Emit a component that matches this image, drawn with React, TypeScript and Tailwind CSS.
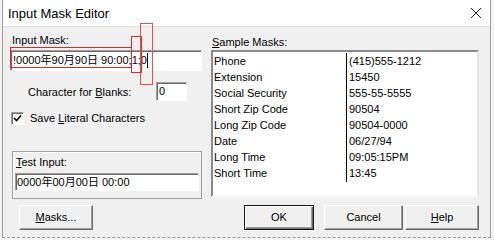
import { ReactNode } from "react";

const sunken =
  "border border-t-[#a0a0a0] border-l-[#a0a0a0] border-b-white border-r-white shadow-[inset_1px_1px_0_#696969] bg-white";

function Btn({ children, w, def, className = "" }: { children: ReactNode; w: string; def?: boolean; className?: string }) {
  return (
    <div
      className={`${w} h-[25px] flex items-center justify-center bg-[#f0f0f0] ${
        def
          ? "border border-[#1a1a1a] shadow-[inset_1px_1px_0_#fff,inset_-1px_-1px_0_#696969,inset_-2px_-2px_0_#a0a0a0]"
          : "border border-t-white border-l-white border-b-[#696969] border-r-[#696969] shadow-[inset_-1px_-1px_0_#a0a0a0]"
      } ${className}`}
    >
      {children}
    </div>
  );
}

const samples = [
  ["Phone", "(415)555-1212"],
  ["Extension", "15450"],
  ["Social Security", "555-55-5555"],
  ["Short Zip Code", "90504"],
  ["Long Zip Code", "90504-0000"],
  ["Date", "06/27/94"],
  ["Long Time", "09:05:15PM"],
  ["Short Time", "13:45"],
];

export default function App() {
  return (
    <div
      className="relative w-[494px] h-[240px] bg-[#f4f4f4] overflow-hidden text-[11px] leading-[13px] text-black"
      style={{ fontFamily: '"Liberation Sans", "Noto Sans CJK SC", sans-serif' }}
    >
      <div className="ml-[2px] w-[489px] h-[237px] border-x border-[#9a9a9a] flex flex-col">
        {/* title bar */}
        <div className="h-[26px] bg-white flex items-center pl-[5px] pr-[8px]">
          <span className="text-[13px]">Input Mask Editor</span>
          <svg className="ml-auto" width="12" height="12" viewBox="0 0 12 12">
            <path d="M1 1L11 11M11 1L1 11" stroke="#222" strokeWidth="1" fill="none" />
          </svg>
        </div>

        <div className="flex-1 bg-[#f0f0f0] border-t border-[#e0e0e0] flex flex-col">
          <div className="h-[178px] flex pl-[7px]">
            {/* left column */}
            <div className="w-[192px] flex flex-col">
              <div className="mt-[7px] pl-[2px]">Input Mask:</div>
              <div className={`mt-[3px] h-[21px] ${sunken} flex items-center pl-[2px]`}>
                <span className="whitespace-nowrap">!0000年90月90日 90:00;1;0</span>
                <span className="w-px h-[15px] bg-black" />
              </div>
              <div className="mt-[11px] flex items-center">
                <span className="ml-[18px] w-[128px] mt-[2px]">
                  Character for <u>B</u>lanks:
                </span>
                <div className={`w-[31px] h-[19px] ${sunken} flex items-center pl-[2px]`}>0</div>
              </div>
              <div className="mt-[11px] flex items-center">
                <div className={`ml-[1px] w-[13px] h-[13px] ${sunken} flex items-center justify-center`}>
                  <svg width="9" height="9" viewBox="0 0 9 9">
                    <path d="M1 4L3.5 6.5L8 1.5" stroke="#000" strokeWidth="1.6" fill="none" />
                  </svg>
                </div>
                <span className="ml-[6px]">
                  Save <u>L</u>iteral Characters
                </span>
              </div>
              <div className="mt-[26px] ml-[2px] w-[190px] h-[48px] border border-[#a0a0a0] shadow-[inset_1px_1px_0_#fff] flex flex-col">
                <div className="mt-[4px] pl-[3px]">
                  <u>T</u>est Input:
                </div>
                <div className={`mt-[4px] ml-[2px] w-[184px] h-[18px] ${sunken} flex items-center pl-[1px]`}>
                  0000年00月00日 00:00
                </div>
              </div>
            </div>

            {/* right column */}
            <div className="ml-[9px] w-[268px] flex flex-col">
              <div className="mt-[9px] pl-[1px]">
                <u>S</u>ample Masks:
              </div>
              <div className="mt-[1px] h-[147px] bg-white border-2 border-t-[#8a8a8a] border-l-[#8a8a8a] border-b-[#f8f8f8] border-r-[#e3e3e3] flex pt-[1px]">
                <div className="w-[133px] flex flex-col pl-[1px]">
                  {samples.map(([k]) => (
                    <div key={k} className="h-[16px] flex items-center">
                      {k}
                    </div>
                  ))}
                </div>
                <div className="flex flex-col pl-[2px] border-l border-black h-[129px]">
                  {samples.map(([k, v]) => (
                    <div key={k} className="h-[16px] flex items-center">
                      {v}
                    </div>
                  ))}
                </div>
              </div>
            </div>
          </div>

          {/* buttons */}
          <div className="flex pl-[7px]">
            <Btn w="w-[74px]" className="ml-[9px]">
              <span>
                <u>M</u>asks...
              </span>
            </Btn>
            <Btn w="w-[70px]" def className="ml-[151px]">
              OK
            </Btn>
            <Btn w="w-[79px]" className="ml-[10px]">
              Cancel
            </Btn>
            <Btn w="w-[74px]" className="ml-[2px]">
              <span>
                <u>H</u>elp
              </span>
            </Btn>
          </div>
        </div>
      </div>
      <div className="ml-[2px] w-[489px] border-t border-dashed border-[#9a9a9a]" />

      {/* red annotation boxes */}
      <div className="absolute left-[10px] top-[47px] w-[122px] h-[21px] border border-[#e02828]" />
      <div className="absolute left-[131px] top-[36px] w-[11px] h-[37px] border border-[#e02828]" />
      <div className="absolute left-[140px] top-[23px] w-[13px] h-[62px] border border-[#e85050]" />
    </div>
  );
}
